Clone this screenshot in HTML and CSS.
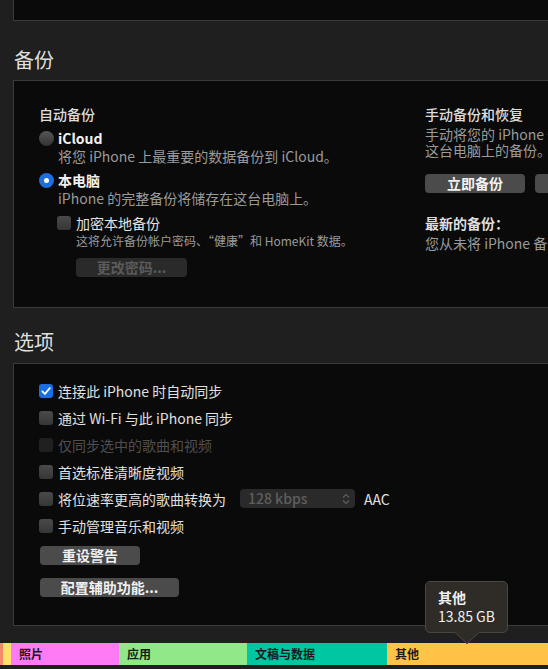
FILE: index.html
```html
<!DOCTYPE html>
<html lang="zh-CN">
<head>
    <meta charset="UTF-8">
    <meta name="viewport" content="width=device-width, initial-scale=1.0">
    <title>iPhone 摘要</title>
    <link rel="stylesheet" href="styles.css">
</head>
<body>
    <!-- 上一个面板的底部 -->
    <div class="panel panel-top"></div>

    <!-- 备份 -->
    <h2 class="section-title">备份</h2>
    <div class="panel panel-backup">
        <div class="col-auto">
            <div class="group-title">自动备份</div>
            <div class="choice">
                <span class="radio"></span>
                <span class="choice-label">iCloud</span>
            </div>
            <div class="desc desc-radio">将您 iPhone 上最重要的数据备份到 iCloud。</div>
            <div class="choice choice-gap">
                <span class="radio radio-on"></span>
                <span class="choice-label">本电脑</span>
            </div>
            <div class="desc desc-radio">iPhone 的完整备份将储存在这台电脑上。</div>
            <div class="choice choice-encrypt">
                <span class="checkbox"></span>
                <span class="encrypt-label">加密本地备份</span>
            </div>
            <div class="desc desc-small">这将允许备份帐户密码、“健康”和 HomeKit 数据。</div>
            <div class="btn btn-disabled btn-password">更改密码...</div>
        </div>
        <div class="col-manual">
            <div class="group-title">手动备份和恢复</div>
            <div class="desc desc-manual">
                <div>手动将您的 iPhone 备份到这台电脑上或恢复储存在</div>
                <div>这台电脑上的备份。</div>
            </div>
            <div class="btn-row">
                <div class="btn btn-backup">立即备份</div>
                <div class="btn btn-backup">恢复备份...</div>
            </div>
            <div class="group-title latest-title">最新的备份：</div>
            <div class="desc latest-desc">您从未将 iPhone 备份到这台电脑上。</div>
        </div>
    </div>

    <!-- 选项 -->
    <h2 class="section-title section-title-options">选项</h2>
    <div class="panel panel-options">
        <div class="option-row">
            <span class="checkbox checkbox-on">
                <svg width="14" height="14" viewBox="0 0 14 14"><path d="M3.4 7.4 L5.9 10 L10.8 4.2" fill="none" stroke="#fff" stroke-width="1.8" stroke-linecap="round" stroke-linejoin="round"/></svg>
            </span>
            <span class="option-label">连接此 iPhone 时自动同步</span>
        </div>
        <div class="option-row">
            <span class="checkbox"></span>
            <span class="option-label">通过 Wi-Fi 与此 iPhone 同步</span>
        </div>
        <div class="option-row option-disabled">
            <span class="checkbox checkbox-disabled"></span>
            <span class="option-label">仅同步选中的歌曲和视频</span>
        </div>
        <div class="option-row">
            <span class="checkbox"></span>
            <span class="option-label">首选标准清晰度视频</span>
        </div>
        <div class="option-row">
            <span class="checkbox"></span>
            <span class="option-label">将位速率更高的歌曲转换为</span>
            <span class="popup">
                128 kbps
                <svg class="popup-arrows" width="8" height="12" viewBox="0 0 8 12"><path d="M1 4.5 L4 1.5 L7 4.5 M1 7.5 L4 10.5 L7 7.5" fill="none" stroke="#5e5e5e" stroke-width="1.2"/></svg>
            </span>
            <span class="option-label">AAC</span>
        </div>
        <div class="option-row">
            <span class="checkbox"></span>
            <span class="option-label">手动管理音乐和视频</span>
        </div>
        <div class="btn btn-reset">重设警告</div>
        <div class="btn btn-access">配置辅助功能...</div>
    </div>

    <!-- 储存空间条 -->
    <div class="storage-bar">
        <div class="seg" style="width: 3px; background: #f48a6c;"></div>
        <div class="seg" style="width: 8px; background: #ffe06a;"></div>
        <div class="seg seg-label" style="width: 108px; background: #ff7bf5;">照片</div>
        <div class="seg seg-label" style="width: 128px; background: #90e888;">应用</div>
        <div class="seg seg-label" style="width: 140px; background: #00c7a2;">文稿与数据</div>
        <div class="seg seg-label seg-last" style="background: #ffc447;">其他</div>
    </div>

    <div class="tooltip">
        <div class="tooltip-title">其他</div>
        <div class="tooltip-size">13.85 GB</div>
    </div>
    <svg class="tooltip-arrow" width="26" height="13" viewBox="0 0 26 13"><path d="M0 0 L13 12 L26 0 Z" fill="#2f2c27"/><path d="M0.5 0 L13 11.5 L25.5 0" fill="none" stroke="#4a4740" stroke-width="1"/></svg>
</body>
</html>
```

FILE: styles.css
```css
body {
    margin: 0;
    width: 548px;
    height: 669px;
    overflow: hidden;
    position: relative;
    background-color: #1f1f1f;
    color: #dcdcdc;
    font-family: "Noto Sans CJK SC", "Noto Sans", sans-serif;
    font-size: 14px;
}
.panel {
    background-color: #0a0a0a;
    border: 1px solid #3b3b3b;
    margin-left: 13px;
    margin-right: -40px;
    box-sizing: border-box;
}
.panel-top {
    height: 21px;
    border-top: none;
}
.section-title {
    margin: 0;
    padding: 27px 0 8px 14px;
    font-size: 20px;
    font-weight: 400;
    line-height: 24px;
    color: #dedede;
}
.section-title-options {
    padding-top: 22px;
    padding-bottom: 9px;
}
.panel-backup {
    height: 228px;
    padding: 24px 0 0 25px;
    display: flex;
}
.col-auto {
    width: 386px;
    flex: none;
}
.col-manual {
    flex: none;
    white-space: nowrap;
}
.group-title {
    line-height: 18px;
    font-size: 14px;
    font-weight: 500;
    color: #dedede;
}
.choice {
    display: flex;
    align-items: center;
    height: 18px;
    margin-top: 6px;
}
.choice-label {
    margin-left: 4px;
    font-weight: 700;
    color: #f2f2f2;
}
.radio {
    width: 15px;
    height: 15px;
    border-radius: 50%;
    background: linear-gradient(#575757, #333);
    display: flex;
    align-items: center;
    justify-content: center;
}
.radio-on {
    background: #1b6fe0;
}
.radio-on::after {
    content: "";
    width: 5px;
    height: 5px;
    border-radius: 50%;
    background: #fff;
}
.desc {
    line-height: 18px;
    color: #9a9a9a;
    white-space: nowrap;
}
.desc-radio {
    padding-left: 19px;
}
.choice-encrypt {
    margin-top: 7px;
    margin-left: 18px;
}
.encrypt-label {
    margin-left: 5px;
    color: #e2e2e2;
}
.desc-small {
    padding-left: 37px;
    font-size: 12px;
}
.checkbox {
    width: 14px;
    height: 14px;
    border-radius: 3px;
    background: linear-gradient(#4a4a4a, #363636);
    flex: none;
    display: block;
}
.checkbox svg {
    display: block;
}
.checkbox-on {
    background: #1a6ee0;
}
.checkbox-disabled {
    background: #202020;
}
.btn {
    height: 19px;
    line-height: 19px;
    border-radius: 4px;
    background-color: #4b4b4b;
    color: #f2f2f2;
    font-weight: 700;
    text-align: center;
    box-sizing: border-box;
}
.btn-disabled {
    background-color: #2a2a2a;
    color: #5a5a5a;
}
.btn-password {
    width: 111px;
    margin: 8px 0 0 37px;
}
.desc-manual {
    line-height: 15.5px;
    margin-top: 4px;
}
.btn-row {
    display: flex;
    gap: 10px;
    margin-top: 16px;
}
.btn-backup {
    width: 100px;
}
.latest-title {
    margin-top: 21px;
    font-weight: 700;
}
.latest-desc {
    margin-top: 2px;
}
.panel-options {
    height: 263px;
    padding: 13px 0 0 25px;
}
.option-row {
    display: flex;
    align-items: center;
    height: 27px;
}
.option-label {
    margin-left: 5px;
    color: #e0e0e0;
}
.option-disabled .option-label {
    color: #4f4f4f;
}
.popup {
    position: relative;
    width: 115px;
    height: 19px;
    line-height: 19px;
    margin-left: 14px;
    margin-right: 4px;
    padding-left: 8px;
    box-sizing: border-box;
    border-radius: 4px;
    background-color: #2a2a2a;
    color: #5e5e5e;
    font-weight: 500;
}
.popup-arrows {
    position: absolute;
    right: 5px;
    top: 4px;
}
.btn-reset {
    width: 100px;
    margin: 7px 0 0 1px;
}
.btn-access {
    width: 139px;
    margin: 13px 0 0 1px;
}
.storage-bar {
    display: flex;
    height: 22px;
    margin-top: 17px;
}
.seg {
    flex: none;
    box-sizing: border-box;
    overflow: hidden;
}
.seg-label {
    padding-left: 8px;
    font-size: 12px;
    font-weight: 700;
    line-height: 22px;
    color: #1a1a1a;
}
.seg-last {
    flex: 1;
}
.tooltip {
    position: absolute;
    left: 425px;
    top: 581px;
    width: 83px;
    height: 52px;
    box-sizing: border-box;
    padding: 6px 0 0 12px;
    background-color: #2f2c27;
    border: 1px solid #4a4740;
    border-radius: 5px;
    color: #f0f0f0;
    line-height: 19px;
}
.tooltip-title {
    font-weight: 700;
}
.tooltip-arrow {
    position: absolute;
    left: 454px;
    top: 632px;
}
```
